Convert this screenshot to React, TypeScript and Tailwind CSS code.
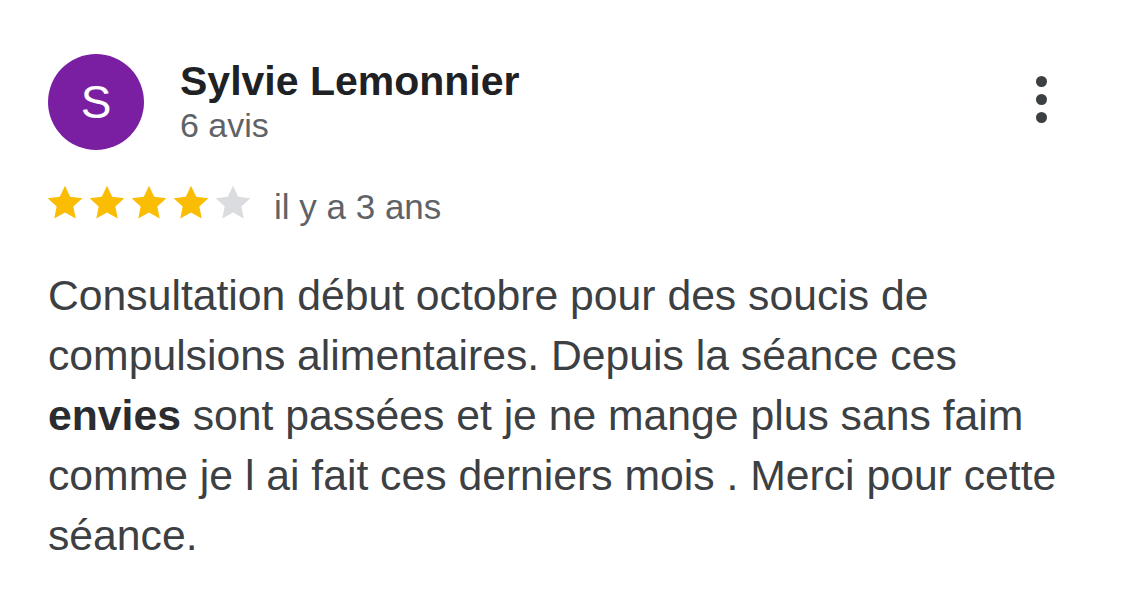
import React from "react";

const font = { fontFamily: '"Liberation Sans", Arial, Helvetica, sans-serif' };

function Star({ filled }: { filled: boolean }) {
  return (
    <svg viewBox="0 0 24 24" className="w-[44px] h-[44px] -mx-[1px]">
      <path
        d="M12 2.6l2.83 6.05 6.62.78-4.9 4.53 1.3 6.54L12 17.2l-5.85 3.3 1.3-6.54-4.9-4.53 6.62-.78z"
        fill={filled ? "#fbbc04" : "#dadce0"}
      />
    </svg>
  );
}

export default function App() {
  const rating = 4;

  return (
    <div className="w-[1125px] h-[592px] bg-white px-[48px] pt-[54px] overflow-hidden" style={font}>
      {/* header */}
      <div className="flex items-start">
        <div className="w-[96px] h-[96px] rounded-full bg-[#7b1fa2] flex items-center justify-center text-white text-[46px] leading-none">
          S
        </div>
        <div className="ml-[36px] pt-[3px]">
          <div className="text-[41px] leading-[48px] font-bold text-[#202124]">Sylvie Lemonnier</div>
          <div className="text-[34px] leading-[40px] text-[#5f6368]">6 avis</div>
        </div>
        <button className="ml-auto mr-[30px] mt-[22px] flex flex-col gap-[7px]">
          <span className="w-[11px] h-[11px] rounded-full bg-[#3c4043]" />
          <span className="w-[11px] h-[11px] rounded-full bg-[#3c4043]" />
          <span className="w-[11px] h-[11px] rounded-full bg-[#3c4043]" />
        </button>
      </div>

      {/* rating */}
      <div className="flex items-center mt-[29px]">
        <div className="flex -ml-[4px]">
          {[1, 2, 3, 4, 5].map((i) => (
            <Star key={i} filled={i <= rating} />
          ))}
        </div>
        <span className="ml-[20px] pt-[8px] text-[35px] leading-[40px] text-[#5f6368]">il y a 3 ans</span>
      </div>

      {/* body */}
      <p className="mt-[38px] text-[42.7px] leading-[60px] text-[#3c4043]">
        Consultation début octobre pour des soucis de compulsions alimentaires. Depuis la séance ces{" "}
        <b className="font-bold text-[#2a2c2f]">envies</b> sont passées et je ne mange plus sans faim comme je l ai
        fait ces derniers mois . Merci pour cette séance.
      </p>
    </div>
  );
}
